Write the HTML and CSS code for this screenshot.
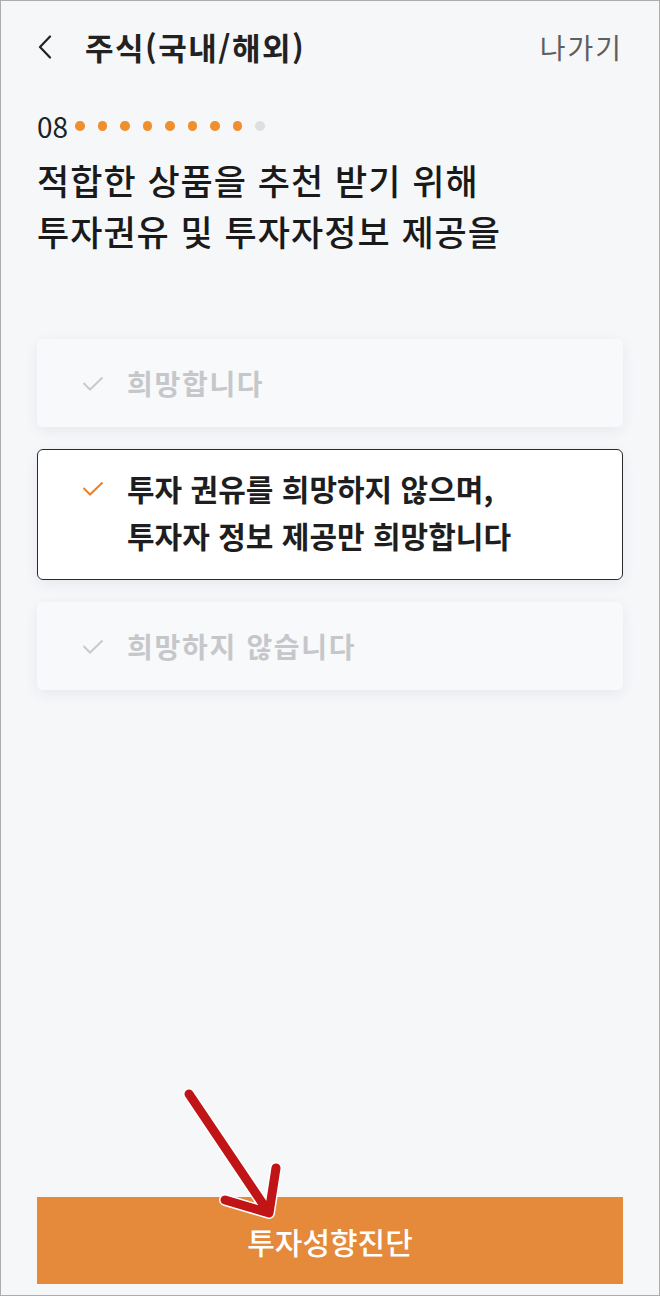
FILE: index.html
```html
<!DOCTYPE html>
<html lang="ko">
<head>
    <meta charset="UTF-8">
    <meta name="viewport" content="width=device-width, initial-scale=1.0">
    <title>주식(국내/해외)</title>
    <link rel="stylesheet" href="styles.css">
</head>
<body>
    <div class="screen">
        <div class="header">
            <a href="" class="back">
                <svg width="16" height="24" viewBox="0 0 16 24"><path d="M13 1.5 L3 12 L13 22.5" fill="none" stroke="#222" stroke-width="2.2" stroke-linecap="round" stroke-linejoin="round"/></svg>
            </a>
            <h1 class="title">주식(국내/해외)</h1>
            <a href="" class="exit">나가기</a>
        </div>

        <div class="progress">
            <span class="step">08</span>
            <ul class="dots">
                <li class="on"></li>
                <li class="on"></li>
                <li class="on"></li>
                <li class="on"></li>
                <li class="on"></li>
                <li class="on"></li>
                <li class="on"></li>
                <li class="on"></li>
                <li></li>
            </ul>
        </div>

        <h2 class="question">적합한 상품을 추천 받기 위해<br>투자권유 및 투자자정보 제공을</h2>

        <div class="options">
            <div class="option">
                <svg class="check" width="22" height="15" viewBox="0 0 22 15"><path d="M1.5 7 L8 13.5 L20.5 1.5" fill="none" stroke="currentColor" stroke-width="2"/></svg>
                <span>희망합니다</span>
            </div>
            <div class="option selected">
                <svg class="check" width="22" height="15" viewBox="0 0 22 15"><path d="M1.5 7 L8 13.5 L20.5 1.5" fill="none" stroke="currentColor" stroke-width="2"/></svg>
                <span>투자 권유를 희망하지 않으며,<br>투자자 정보 제공만 희망합니다</span>
            </div>
            <div class="option">
                <svg class="check" width="22" height="15" viewBox="0 0 22 15"><path d="M1.5 7 L8 13.5 L20.5 1.5" fill="none" stroke="currentColor" stroke-width="2"/></svg>
                <span>희망하지 않습니다</span>
            </div>
        </div>

        <button class="submit">투자성향진단</button>

        <!-- annotation arrow -->
        <svg class="arrow" width="120" height="150" viewBox="0 0 120 150">
            <g fill="none" stroke-linecap="round" stroke-linejoin="round">
                <path d="M12 8 L92 127 M48 114 L92 127 L99 82" stroke="#fff" stroke-width="12"/>
                <path d="M12 8 L92 127 M48 114 L92 127 L99 82" stroke="#c01417" stroke-width="9"/>
            </g>
        </svg>
    </div>
</body>
</html>
```

FILE: styles.css
```css
* {
    padding: 0;
    margin: 0;
    box-sizing: border-box;
}
body {
    width: 660px;
    background: #f6f7f9;
    font-family: "Noto Sans CJK KR", "Noto Sans", sans-serif;
    color: #1c1c1e;
}
.screen {
    position: relative;
    display: flex;
    flex-direction: column;
    min-height: 1296px;
    border: 1px solid #adadad;
    padding: 0 36px 11px;
}
.header {
    display: flex;
    align-items: center;
    height: 91px;
}
.back {
    display: block;
    width: 16px;
    height: 24px;
    margin-right: 32px;
}
.back svg {
    display: block;
}
.title {
    flex: 1;
    font-size: 31px;
    font-weight: 700;
    letter-spacing: 1.5px;
    color: #222;
}
.exit {
    font-size: 28px;
    letter-spacing: 2px;
    color: #5f5f62;
    text-decoration: none;
}
.progress {
    display: flex;
    align-items: center;
    height: 24px;
    margin-top: 22px;
}
.step {
    font-size: 28px;
    letter-spacing: 0;
    line-height: 24px;
    color: #222;
}
.dots {
    display: flex;
    gap: 13px;
    margin-left: 7px;
    list-style: none;
}
.dots li {
    width: 9.5px;
    height: 9.5px;
    border-radius: 50%;
    background: #dedfe2;
}
.dots li.on {
    background: #ef8f2e;
}
.question {
    margin-top: 16px;
    font-size: 35px;
    font-weight: 500;
    line-height: 51px;
    letter-spacing: 1px;
    color: #1a1a1a;
}
.options {
    display: flex;
    flex-direction: column;
    gap: 22px;
    margin-top: 83px;
}
.option {
    display: flex;
    align-items: center;
    min-height: 88px;
    padding: 20px 45px;
    background: #f8f9fb;
    border-radius: 6px;
    box-shadow: 0 4px 14px rgba(30, 40, 90, 0.07);
    font-size: 28px;
    font-weight: 700;
    letter-spacing: 1.7px;
    color: #c6c7ca;
    line-height: 40px;
}
.option .check {
    flex: none;
    margin-right: 23px;
    color: #c9cacd;
}
.option.selected {
    background: #fff;
    border: 1px solid #2a2a2c;
    padding: 13px 44px 19px;
    min-height: 131px;
    font-size: 30px;
    letter-spacing: 0;
    line-height: 47px;
    color: #1e1e20;
}
.option.selected .check {
    color: #ef7f22;
    margin-top: -46px;
}
.submit {
    margin-top: auto;
    height: 87px;
    border: none;
    background: #e5893b;
    color: #fff;
    font-family: inherit;
    font-size: 30px;
    font-weight: 500;
}
.arrow {
    position: absolute;
    left: 176px;
    top: 1085px;
}
```
